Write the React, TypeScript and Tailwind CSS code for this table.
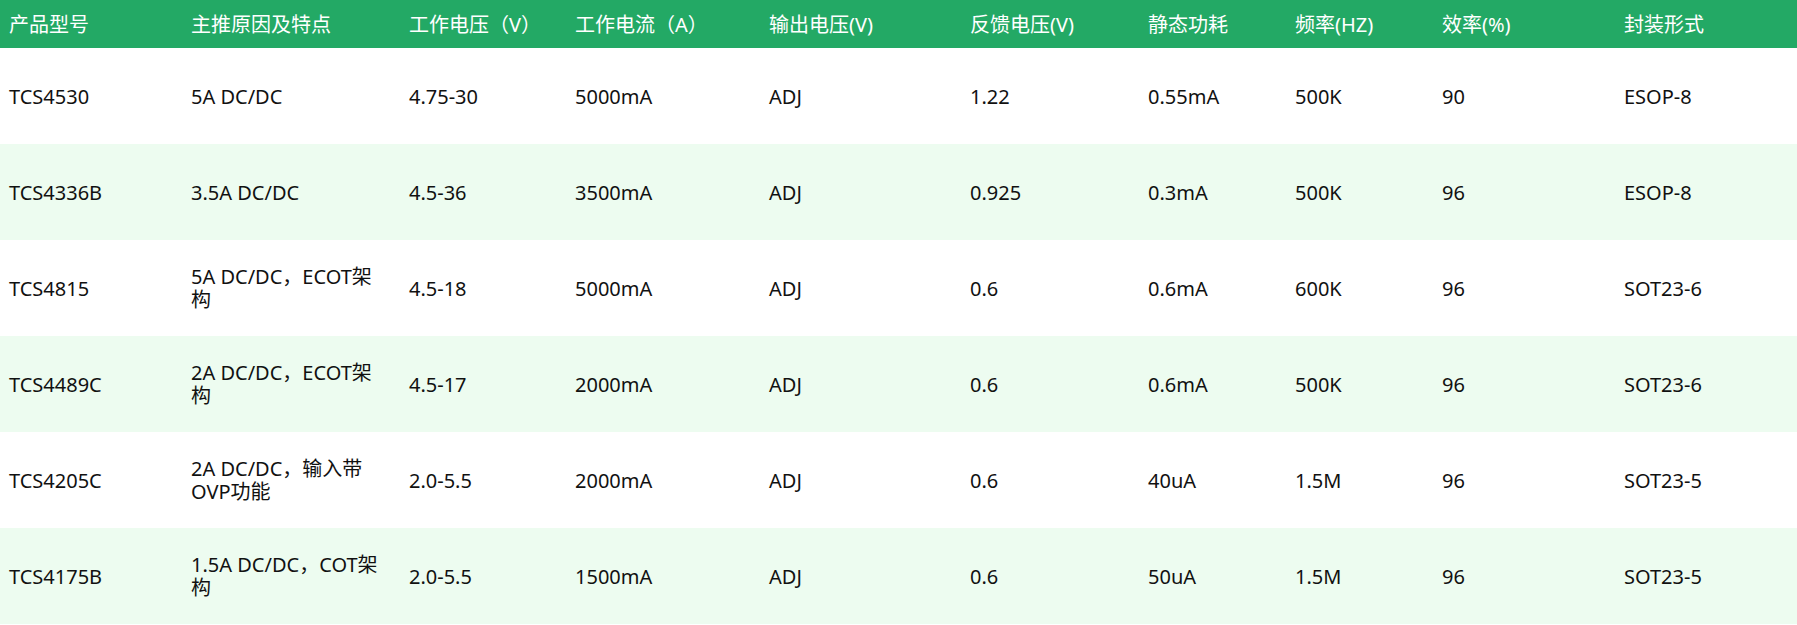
import React from "react";

const headers = [
  "产品型号",
  "主推原因及特点",
  "工作电压（V）",
  "工作电流（A）",
  "输出电压(V)",
  "反馈电压(V)",
  "静态功耗",
  "频率(HZ)",
  "效率(%)",
  "封装形式",
];

const rows = [
  ["TCS4530", "5A DC/DC", "4.75-30", "5000mA", "ADJ", "1.22", "0.55mA", "500K", "90", "ESOP-8"],
  ["TCS4336B", "3.5A DC/DC", "4.5-36", "3500mA", "ADJ", "0.925", "0.3mA", "500K", "96", "ESOP-8"],
  ["TCS4815", "5A DC/DC，ECOT架构", "4.5-18", "5000mA", "ADJ", "0.6", "0.6mA", "600K", "96", "SOT23-6"],
  ["TCS4489C", "2A DC/DC，ECOT架构", "4.5-17", "2000mA", "ADJ", "0.6", "0.6mA", "500K", "96", "SOT23-6"],
  ["TCS4205C", "2A DC/DC，输入带OVP功能", "2.0-5.5", "2000mA", "ADJ", "0.6", "40uA", "1.5M", "96", "SOT23-5"],
  ["TCS4175B", "1.5A DC/DC，COT架构", "2.0-5.5", "1500mA", "ADJ", "0.6", "50uA", "1.5M", "96", "SOT23-5"],
];

const widths = [182, 218, 166, 194, 201, 178, 147, 147, 182, 182];

export default function App() {
  return (
    <div
      className="w-[1797px] bg-white"
      style={{ fontFamily: '"Noto Sans", "Noto Sans CJK SC", sans-serif' }}
    >
      <table className="w-full table-fixed border-collapse text-[20px] leading-[23px]">
        <colgroup>
          {widths.map((w, i) => (
            <col key={i} style={{ width: w }} />
          ))}
        </colgroup>
        <thead>
          <tr className="h-[48px] bg-[#23a965] text-white">
            {headers.map((h) => (
              <th key={h} className="px-[9px] py-0 text-left align-middle font-normal">
                {h}
              </th>
            ))}
          </tr>
        </thead>
        <tbody>
          {rows.map((r, i) => (
            <tr
              key={r[0]}
              className={
                i % 2 === 1
                  ? "h-[96px] bg-[#edfcf0] text-[#111111]"
                  : "h-[96px] bg-white text-[#111111]"
              }
            >
              {r.map((c, j) => (
                <td key={j} className="px-[9px] py-0 text-left align-middle">
                  {c}
                </td>
              ))}
            </tr>
          ))}
        </tbody>
      </table>
    </div>
  );
}
